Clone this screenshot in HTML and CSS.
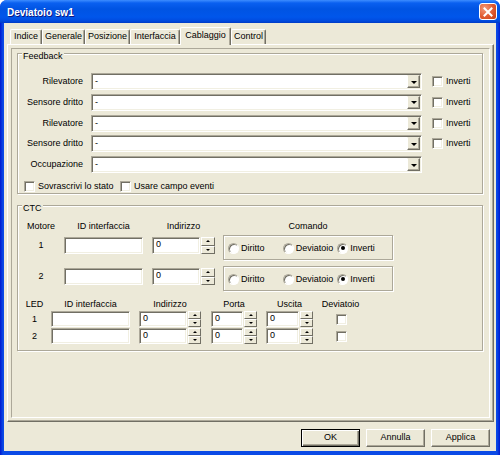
FILE: index.html
```html
<!DOCTYPE html>
<html lang="it">
<head>
    <meta charset="UTF-8">
    <title>Deviatoio sw1</title>
    <link rel="stylesheet" href="styles.css">
</head>
<body>
    <div class="window">
        <!-- Title bar -->
        <div class="titlebar">
            <span class="title">Deviatoio sw1</span>
            <span class="close">
                <svg width="10" height="10" viewBox="0 0 10 10"><path d="M1.5 1.5 L8.5 8.5 M8.5 1.5 L1.5 8.5" stroke="#fff" stroke-width="2" stroke-linecap="square"/></svg>
            </span>
        </div>
        <div class="client">
            <!-- Tabs -->
            <div class="tabs">
                <span class="tab" style="width: 32px">Indice</span>
                <span class="tab" style="width: 43px">Generale</span>
                <span class="tab" style="width: 45px">Posizione</span>
                <span class="tab" style="width: 50px">Interfaccia</span>
                <span class="tab active" style="width: 51px">Cablaggio</span>
                <span class="tab" style="width: 35px">Control</span>
            </div>
            <div class="panel">
                <div class="page">
                    <!-- Feedback -->
                    <div class="group feedback">
                        <span class="caption">Feedback</span>
                        <div class="fb-rows">
                            <div class="fb-row">
                                <span class="lbl">Rilevatore</span>
                                <div class="combo"><span class="val">-</span><span class="drop"></span></div>
                                <span class="check"><span class="box"></span>Inverti</span>
                            </div>
                            <div class="fb-row">
                                <span class="lbl">Sensore dritto</span>
                                <div class="combo"><span class="val">-</span><span class="drop"></span></div>
                                <span class="check"><span class="box"></span>Inverti</span>
                            </div>
                            <div class="fb-row">
                                <span class="lbl">Rilevatore</span>
                                <div class="combo"><span class="val">-</span><span class="drop"></span></div>
                                <span class="check"><span class="box"></span>Inverti</span>
                            </div>
                            <div class="fb-row">
                                <span class="lbl">Sensore dritto</span>
                                <div class="combo"><span class="val">-</span><span class="drop"></span></div>
                                <span class="check"><span class="box"></span>Inverti</span>
                            </div>
                            <div class="fb-row">
                                <span class="lbl">Occupazione</span>
                                <div class="combo"><span class="val">-</span><span class="drop"></span></div>
                            </div>
                        </div>
                        <div class="flags">
                            <span class="check first"><span class="box"></span>Sovrascrivi lo stato</span>
                            <span class="check"><span class="box"></span>Usare campo eventi</span>
                        </div>
                    </div>
                    <!-- CTC -->
                    <div class="group ctc">
                        <span class="caption">CTC</span>
                        <div class="m-row head">
                            <span class="c-motor">Motore</span>
                            <span class="c-id">ID interfaccia</span>
                            <span class="c-addr">Indirizzo</span>
                            <span class="c-cmd">Comando</span>
                        </div>
                        <div class="m-row first">
                            <span class="c-motor num">1</span>
                            <span class="c-id"><span class="edit"></span></span>
                            <span class="c-addr"><span class="edit">0</span><span class="spin"><i></i><i class="dn"></i></span></span>
                            <span class="c-cmd radios">
                                <span class="radio"><span class="dot"></span>Diritto</span>
                                <span class="radio"><span class="dot"></span>Deviatoio</span>
                                <span class="radio"><span class="dot on"></span>Inverti</span>
                            </span>
                        </div>
                        <div class="m-row second">
                            <span class="c-motor num">2</span>
                            <span class="c-id"><span class="edit"></span></span>
                            <span class="c-addr"><span class="edit">0</span><span class="spin"><i></i><i class="dn"></i></span></span>
                            <span class="c-cmd radios">
                                <span class="radio"><span class="dot"></span>Diritto</span>
                                <span class="radio"><span class="dot"></span>Deviatoio</span>
                                <span class="radio"><span class="dot on"></span>Inverti</span>
                            </span>
                        </div>
                        <!-- LED -->
                        <div class="l-row head">
                            <span class="l-lbl">LED</span>
                            <span class="l-id">ID interfaccia</span>
                            <span class="l-addr">Indirizzo</span>
                            <span class="l-port">Porta</span>
                            <span class="l-out">Uscita</span>
                            <span class="l-dev">Deviatoio</span>
                        </div>
                        <div class="l-row">
                            <span class="l-lbl">1</span>
                            <span class="l-id"><span class="edit"></span></span>
                            <span class="l-addr"><span class="edit">0</span><span class="spin"><i></i><i class="dn"></i></span></span>
                            <span class="l-port"><span class="edit">0</span><span class="spin"><i></i><i class="dn"></i></span></span>
                            <span class="l-out"><span class="edit">0</span><span class="spin"><i></i><i class="dn"></i></span></span>
                            <span class="l-dev"><span class="box"></span></span>
                        </div>
                        <div class="l-row">
                            <span class="l-lbl">2</span>
                            <span class="l-id"><span class="edit"></span></span>
                            <span class="l-addr"><span class="edit">0</span><span class="spin"><i></i><i class="dn"></i></span></span>
                            <span class="l-port"><span class="edit">0</span><span class="spin"><i></i><i class="dn"></i></span></span>
                            <span class="l-out"><span class="edit">0</span><span class="spin"><i></i><i class="dn"></i></span></span>
                            <span class="l-dev"><span class="box"></span></span>
                        </div>
                    </div>
                </div>
            </div>
            <!-- Dialog buttons -->
            <div class="buttons">
                <span class="btn default">OK</span>
                <span class="btn">Annulla</span>
                <span class="btn">Applica</span>
            </div>
        </div>
    </div>
</body>
</html>
```

FILE: styles.css
```css
body {
    margin: 0;
    background: #fff;
    font-family: "Liberation Sans", Arial, sans-serif;
    font-size: 9px;
    line-height: 11px;
    color: #000;
}
.window {
    width: 500px;
    height: 455px;
    display: flex;
    flex-direction: column;
    background: linear-gradient(to right, #0019cf 0, #0b4ae6 3px, #0b4ae6 497px, #0019cf 500px);
    border-radius: 7px 7px 0 0;
    overflow: hidden;
}
.titlebar {
    height: 23px;
    box-sizing: border-box;
    display: flex;
    align-items: center;
    padding: 2px 3px 0 7px;
    background: linear-gradient(#3d8dff 0, #0a60f0 3px, #0054e3 9px, #0056eb 17px, #004ade 21px, #003bc4 23px);
}
.title {
    flex: 1;
    color: #fff;
    font-weight: bold;
    font-size: 10px;
    text-shadow: 1px 1px 0 #0a1883;
}
.close {
    width: 18px;
    height: 17px;
    box-sizing: border-box;
    border: 1px solid #fff;
    border-radius: 3px;
    background: radial-gradient(circle at 30% 30%, #f49a7a 0, #e05a30 55%, #c53d12 100%);
    display: flex;
    align-items: center;
    justify-content: center;
    margin-top: -2px;
}
.close svg {
    display: block;
}
.client {
    flex: 1;
    margin: 0 4px 4px;
    background: #ece9d8;
    display: flex;
    flex-direction: column;
}

/* tabs */
.tabs {
    display: flex;
    align-items: flex-end;
    height: 17px;
    margin: 4px 0 0 6px;
}
.tab {
    height: 15px;
    box-sizing: border-box;
    text-align: center;
    line-height: 13px;
    border-top: 1px solid #fff;
    border-left: 1px solid #fff;
    border-right: 1px solid #716f64;
    box-shadow: inset -1px 0 0 #aca899;
    border-radius: 2px 2px 0 0;
}
.tab.active {
    height: 18px;
    margin-bottom: -1px;
    line-height: 15px;
    background: #ece9d8;
    position: relative;
    z-index: 1;
}
.panel {
    height: 378px;
    box-sizing: border-box;
    margin: 0 2px 0 3px;
    padding: 3px;
    border: 1px solid;
    border-color: #fff #716f64 #716f64 #fff;
    box-shadow: inset -1px -1px 0 #aca899;
    display: flex;
}
.page {
    flex: 1;
    border: 1px solid;
    border-color: #aca899 #fff #fff #aca899;
}

/* group boxes */
.group {
    box-sizing: border-box;
    margin: 4px 6px 0 5px;
    border: 1px solid #aca899;
    box-shadow: inset 1px 1px 0 #fff, 1px 1px 0 #fff;
}
.caption {
    display: block;
    width: fit-content;
    margin: -3px 0 0 4px;
    padding: 0 1px;
    background: #ece9d8;
}
.feedback {
    height: 141px;
}
.ctc {
    height: 146px;
    margin-top: 11px;
}

/* sunken controls */
.combo, .edit, .box {
    box-sizing: border-box;
    background: #fff;
    border: 1px solid;
    border-color: #aca899 #fff #fff #aca899;
    box-shadow: inset 1px 1px 0 #716f64, inset -1px -1px 0 #f1efe2;
}
.fb-rows {
    margin-top: 11px;
    display: flex;
    flex-direction: column;
    gap: 3.75px;
}
.fb-row {
    display: flex;
    align-items: center;
    height: 17px;
}
.lbl {
    width: 65px;
    text-align: right;
}
.combo {
    width: 331px;
    height: 17px;
    margin-left: 8px;
    display: flex;
    align-items: center;
}
.combo .val {
    flex: 1;
    padding-left: 3px;
}
.drop {
    width: 13px;
    height: 13px;
    box-sizing: border-box;
    margin-right: 1px;
    background: #ece9d8;
    border: 1px solid;
    border-color: #ece9d8 #716f64 #716f64 #fff;
    box-shadow: inset -1px -1px 0 #aca899;
    display: flex;
    align-items: center;
    justify-content: center;
}
.drop::after {
    content: "";
    border-top: 3px solid #000;
    border-left: 3px solid transparent;
    border-right: 3px solid transparent;
    margin-top: 1px;
}
.check {
    display: flex;
    align-items: center;
    gap: 3px;
}
.fb-row .check {
    margin-left: 10px;
}
.box {
    width: 11px;
    height: 11px;
}
.flags {
    display: flex;
    margin: 8px 0 0 6px;
}
.flags .first {
    width: 96px;
}

/* CTC motors */
.m-row {
    display: flex;
    align-items: flex-start;
}
.m-row.head {
    margin-top: 7px;
    height: 11px;
}
.m-row.head span {
    text-align: center;
}
.m-row.first {
    margin-top: 3px;
}
.m-row.second {
    margin-top: 6px;
}
.c-motor {
    width: 46px;
    text-align: center;
}
.c-motor.num {
    margin-top: 5px;
}
.c-id {
    width: 79px;
    display: flex;
}
.c-addr {
    width: 63px;
    margin-left: 9px;
    display: flex;
    gap: 1px;
}
.c-cmd {
    width: 170px;
    margin-left: 8px;
}
.m-row .c-id, .m-row .c-addr {
    margin-top: 2px;
    height: 17px;
}
.m-row.head .c-id, .m-row.head .c-addr {
    margin-top: 0;
    height: 11px;
    display: block;
}
.edit {
    flex: 1;
    padding-left: 3px;
    line-height: 13px;
}
.spin {
    width: 14px;
    display: flex;
    flex-direction: column;
}
.spin i {
    flex: 1;
    box-sizing: border-box;
    background: #ece9d8;
    border: 1px solid;
    border-color: #fff #716f64 #716f64 #fff;
    display: flex;
    align-items: center;
    justify-content: center;
}
.spin i::after {
    content: "";
    border-bottom: 2px solid #000;
    border-left: 2px solid transparent;
    border-right: 2px solid transparent;
}
.spin i.dn::after {
    border-bottom: 0;
    border-top: 2px solid #000;
}
.radios {
    height: 25px;
    box-sizing: border-box;
    border: 1px solid #aca899;
    box-shadow: inset 1px 1px 0 #fff, 1px 1px 0 #fff;
    padding: 1px 0 0 4px;
    display: flex;
    align-items: center;
}
.radio {
    width: 56px;
    display: flex;
    align-items: center;
    gap: 2px;
}
.dot {
    width: 11px;
    height: 11px;
    box-sizing: border-box;
    border-radius: 50%;
    background: #fff;
    border: 1px solid;
    border-color: #aca899 #fff #fff #aca899;
    box-shadow: inset 1px 1px 0 #716f64;
    display: flex;
    align-items: center;
    justify-content: center;
}
.dot.on::after {
    content: "";
    width: 4px;
    height: 4px;
    border-radius: 50%;
    background: #000;
}

/* CTC LEDs */
.l-row {
    display: flex;
    height: 16px;
    margin-top: 1px;
}
.l-row.head {
    height: 11px;
    margin-top: 8px;
}
.l-row.head span {
    display: block;
    text-align: center;
}
.l-row > span {
    display: flex;
    gap: 1px;
}
.l-lbl {
    width: 33px;
    justify-content: center;
    align-items: center;
}
.l-id {
    width: 79px;
}
.l-addr {
    width: 62px;
    margin-left: 9px;
}
.l-port {
    width: 46px;
    margin-left: 10px;
}
.l-out {
    width: 47px;
    margin-left: 9px;
}
.l-row .spin {
    width: 13px;
}
.l-row .edit {
    line-height: 12px;
}
.l-dev {
    width: 55px;
    justify-content: center;
    align-items: center;
}
.l-dev .box {
    margin-left: 1px;
}

/* dialog buttons */
.buttons {
    display: flex;
    justify-content: flex-end;
    gap: 6px;
    margin: 7px 6px 0 0;
}
.btn {
    width: 59px;
    height: 18px;
    box-sizing: border-box;
    text-align: center;
    line-height: 15px;
    border: 1px solid;
    border-color: #fff #716f64 #716f64 #fff;
    box-shadow: inset -1px -1px 0 #aca899;
}
.btn.default {
    border-color: #000;
    box-shadow: inset 1px 1px 0 #fff, inset -1px -1px 0 #716f64, inset -2px -2px 0 #aca899;
}
```
